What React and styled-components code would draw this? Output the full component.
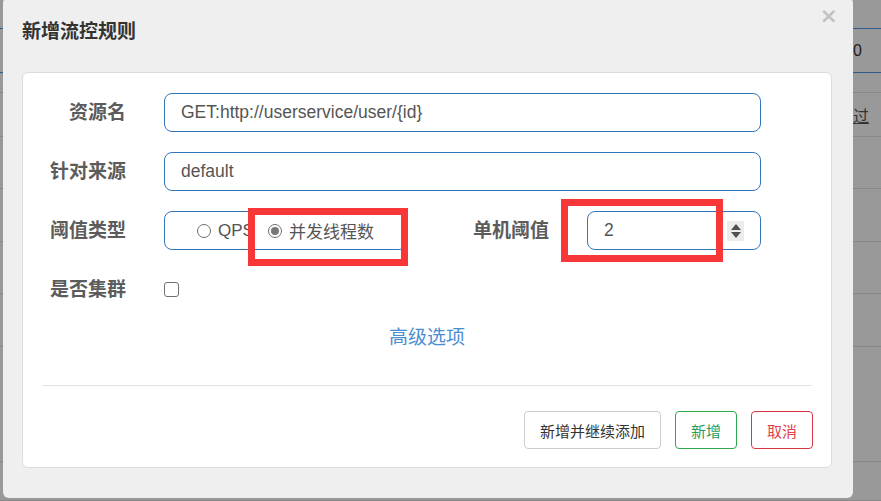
import React from 'react';
import styled, { createGlobalStyle } from 'styled-components';

const GlobalStyle = createGlobalStyle`
    html, body {
        margin: 0;
        padding: 0;
        overflow: hidden;
    }
    body {
        font-family: "Liberation Sans", "Noto Sans CJK SC", sans-serif;
    }
    * {
        box-sizing: border-box;
    }
`;

const Page = styled.div`
    position: relative;
    width: 881px;
    height: 501px;
    background: #999999;
    overflow: hidden;
`;

/* dimmed rule table behind the dialog */
const BgTable = styled.div`
    display: flex;
    flex-direction: column;
`;

const BgRow = styled.div`
    display: grid;
    grid-template-columns: 853px 1fr;
    align-items: center;
    height: ${p => p.$h}px;
    border-bottom: 1px solid ${p => (p.$head ? '#2d5c89' : '#888888')};
    font-size: 16px;
    color: #222;
`;

const BgCell = styled.span`
    grid-column: 2;
    white-space: nowrap;
    text-decoration: ${p => (p.$link ? 'underline' : 'none')};
    color: ${p => (p.$link ? '#333' : '#1e1e1e')};
`;

const Dialog = styled.div`
    position: absolute;
    left: 3px;
    top: -3px;
    width: 850px;
    height: 501px;
    background: #efefef;
    border-radius: 6px;
    display: flex;
    flex-direction: column;
`;

const Header = styled.div`
    display: flex;
    justify-content: space-between;
    align-items: flex-start;
    height: 75px;
    padding: 0 15px 0 19px;
`;

const Title = styled.h4`
    margin: 23px 0 0;
    font-size: 19px;
    line-height: 24px;
    font-weight: 700;
    color: #333;
`;

const Close = styled.button`
    margin-top: 9px;
    padding: 0;
    border: 0;
    background: none;
    font-family: "DejaVu Sans", sans-serif;
    font-size: 22px;
    line-height: 20px;
    font-weight: 700;
    color: #c2c2c2;
`;

const Card = styled.div`
    margin: 0 21px 0 19px;
    height: 396px;
    background: #fff;
    border: 1px solid #dcdcdc;
    border-radius: 6px;
    padding-top: 20px;
    display: flex;
    flex-direction: column;
`;

const Form = styled.div`
    display: flex;
    flex-direction: column;
    gap: 20px;
`;

const Row = styled.div`
    display: grid;
    grid-template-columns: 103px 243px 104px 174px;
    column-gap: 38px;
    align-items: center;
    height: 39px;
`;

const Label = styled.label`
    text-align: right;
    font-size: 19px;
    line-height: 24px;
    font-weight: 700;
    color: #5c5c5c;
    white-space: nowrap;
`;

const Field = styled.div`
    grid-column: ${p => p.$span || 'auto'};
    height: 39px;
    display: flex;
    align-items: center;
    padding: 0 16px;
    border: 1px solid #3377b9;
    border-radius: 8px;
    font-size: 17.5px;
    color: #555;
    white-space: nowrap;
    overflow: hidden;
`;

const RadioGroup = styled(Field)`
    padding-left: 32px;
    gap: 14px;
`;

const RadioItem = styled.span`
    display: flex;
    align-items: center;
    gap: 7px;
    font-size: 17px;
    color: #555;
`;

const RadioDot = styled.span`
    width: 14px;
    height: 14px;
    border-radius: 50%;
    border: 1px solid #6f6f6f;
    display: flex;
    align-items: center;
    justify-content: center;

    &::after {
        content: '';
        width: 8px;
        height: 8px;
        border-radius: 50%;
        background: ${p => (p.$on ? '#777' : 'transparent')};
    }
`;

const NumberField = styled(Field)`
    justify-content: space-between;
`;

const Spinner = styled.span`
    width: 17px;
    height: 20px;
    background: #ececec;
    display: flex;
    flex-direction: column;
    align-items: center;
    justify-content: center;
    gap: 2px;
`;

const Arrow = styled.span`
    width: 0;
    height: 0;
    border-left: 5px solid transparent;
    border-right: 5px solid transparent;
    ${p => (p.$down ? 'border-top: 6px solid #505050;' : 'border-bottom: 6px solid #505050;')}
`;

const Checkbox = styled.span`
    width: 15px;
    height: 15px;
    border: 1.5px solid #707070;
    border-radius: 3px;
`;

const Advanced = styled.a`
    align-self: center;
    margin-top: 18px;
    font-size: 19px;
    line-height: 22px;
    color: #4a8ed2;
    cursor: pointer;
`;

const Divider = styled.hr`
    margin: 36px 19px 0;
    border: 0;
    border-top: 1px solid #e3e3e3;
`;

const Footer = styled.div`
    display: flex;
    justify-content: flex-end;
    gap: 14px;
    padding: 25px 18px 0;
`;

const tones = {
    plain: { border: '#cccccc', text: '#333' },
    ok: { border: '#2ea84a', text: '#2a9d5c' },
    cancel: { border: '#dc3545', text: '#e0404c' },
};

const Button = styled.button`
    height: 38px;
    padding: 0 15px;
    background: #fff;
    border: 1px solid ${p => tones[p.$tone].border};
    border-radius: 4px;
    font-family: "Liberation Sans", "Noto Sans CJK SC", sans-serif;
    font-size: 15px;
    color: ${p => tones[p.$tone].text};
`;

/* red highlight frames drawn over the form */
const Highlight = styled.div`
    position: absolute;
    border: 7px solid #f83838;
    pointer-events: none;
`;

const bgRows = [
    { h: 29, head: true },
    { h: 44, head: true, text: '0' },
    { h: 20 },
    { h: 44, text: '过', link: true },
    { h: 52 },
    { h: 53 },
    { h: 52 },
    { h: 53 },
    { h: 115 },
    { h: 39 },
];

const App = () => {
    return (
        <Page>
            <GlobalStyle />
            <BgTable>
                {bgRows.map((r, i) => (
                    <BgRow key={i} $h={r.h} $head={r.head}>
                        {r.text && <BgCell $link={r.link}>{r.text}</BgCell>}
                    </BgRow>
                ))}
            </BgTable>

            <Dialog>
                <Header>
                    <Title>新增流控规则</Title>
                    <Close>×</Close>
                </Header>
                <Card>
                    <Form>
                        <Row>
                            <Label>资源名</Label>
                            <Field $span="2 / 5">GET:http://userservice/user/{'{id}'}</Field>
                        </Row>
                        <Row>
                            <Label>针对来源</Label>
                            <Field $span="2 / 5">default</Field>
                        </Row>
                        <Row>
                            <Label>阈值类型</Label>
                            <RadioGroup>
                                <RadioItem><RadioDot />QPS</RadioItem>
                                <RadioItem><RadioDot $on />并发线程数</RadioItem>
                            </RadioGroup>
                            <Label>单机阈值</Label>
                            <NumberField>
                                2
                                <Spinner>
                                    <Arrow />
                                    <Arrow $down />
                                </Spinner>
                            </NumberField>
                        </Row>
                        <Row>
                            <Label>是否集群</Label>
                            <Checkbox />
                        </Row>
                    </Form>
                    <Advanced>高级选项</Advanced>
                    <Divider />
                    <Footer>
                        <Button $tone="plain">新增并继续添加</Button>
                        <Button $tone="ok">新增</Button>
                        <Button $tone="cancel">取消</Button>
                    </Footer>
                </Card>
            </Dialog>

            <Highlight style={{ left: 248, top: 208, width: 160, height: 58 }} />
            <Highlight style={{ left: 561, top: 199, width: 162, height: 63 }} />
        </Page>
    );
};

export default App;
